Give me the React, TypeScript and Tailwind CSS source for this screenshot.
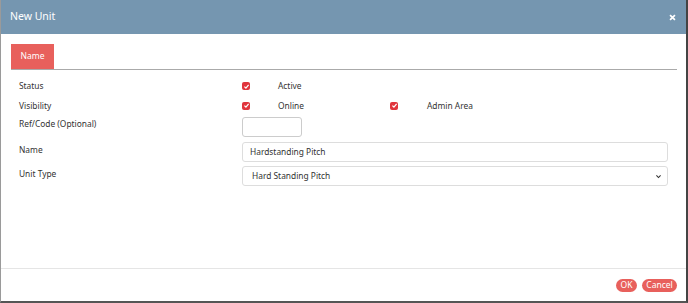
const Check = () => (
  <span className="flex h-[8px] w-[8px] items-center justify-center rounded-[2px] bg-[#e0353d]">
    <svg viewBox="0 0 10 10" className="h-[7px] w-[7px]">
      <path d="M2 5.2 L4.2 7.3 L8 2.8" fill="none" stroke="white" strokeWidth="1.8" />
    </svg>
  </span>
);

const Row = ({ label, children, h, lp = "" }: { label: string; children: React.ReactNode; h: string; lp?: string }) => (
  <div className={`flex ${h}`}>
    <div className={`w-[223px] shrink-0 ${lp}`}>{label}</div>
    <div className="flex-1">{children}</div>
  </div>
);

export default function App() {
  return (
    <div
      className="flex h-[303px] w-[688px] flex-col border-b-2 border-l border-r-2 border-b-[#555] border-l-[#9a9a9a] border-r-[#444] bg-white text-[#333]"
      style={{ fontFamily: '"Noto Sans", "Open Sans", sans-serif' }}
    >
      <div className="flex h-[34px] shrink-0 items-center justify-between bg-[#7596b0] pl-[9px] pr-[10px] text-white">
        <span className="text-[10.5px]">New Unit</span>
        <svg viewBox="0 0 10 10" className="h-[7px] w-[7px]">
          <path d="M1.5 1.5 L8.5 8.5 M8.5 1.5 L1.5 8.5" stroke="white" strokeWidth="2.4" />
        </svg>
      </div>

      <div className="flex-1 pl-[10px] pr-[9px] pt-[10px]">
        <div className="border-b border-[#aaa]">
          <div className="flex h-[25px] w-[43px] items-center justify-center bg-[#e8605c] text-[8.5px] text-white">
            Name
          </div>
        </div>

        <div className="flex flex-col pl-[8px] pt-[7px] text-[8.4px]">
          <Row label="Status" h="h-[19px] items-center">
            <div className="flex items-center">
              <Check />
              <span className="ml-[28px]">Active</span>
            </div>
          </Row>
          <Row label="Visibility" h="h-[19px] items-center pt-[1px]">
            <div className="flex items-center">
              <Check />
              <span className="ml-[28px] w-[112px]">Online</span>
              <Check />
              <span className="ml-[29px]">Admin Area</span>
            </div>
          </Row>
          <Row label="Ref/Code (Optional)" h="h-[24px]" lp="pt-[3px]">
            <div className="mt-[2px] h-[20px] w-[60px] rounded-[3px] border border-[#ccc]" />
          </Row>
          <Row label="Name" h="h-[24px] pt-[3px]" lp="pt-[2px]">
            <div className="flex h-[20px] w-[426px] items-center rounded-[3px] border border-[#ddd] pl-[7px]">
              Hardstanding Pitch
            </div>
          </Row>
          <Row label="Unit Type" h="h-[24px] pt-[3px]" lp="pt-[2px]">
            <div className="flex h-[20px] w-[426px] items-center justify-between rounded-[3px] border border-[#ddd] pl-[9px] pr-[5px]">
              <span>Hard Standing Pitch</span>
              <svg viewBox="0 0 10 10" className="h-[7px] w-[7px]">
                <path d="M2 3.5 L5 6.5 L8 3.5" fill="none" stroke="#333" strokeWidth="1.6" />
              </svg>
            </div>
          </Row>
        </div>
      </div>

      <div className="flex h-[33px] shrink-0 items-center justify-end gap-[5px] border-t border-[#e5e5e5] pr-[9px] pt-[1px]">
        <button className="flex h-[13px] w-[21px] items-center justify-center rounded-full bg-[#e8605c] text-[8.5px] text-white">OK</button>
        <button className="flex h-[13px] w-[35px] items-center justify-center rounded-full bg-[#e8605c] text-[8.5px] text-white">Cancel</button>
      </div>
    </div>
  );
}
